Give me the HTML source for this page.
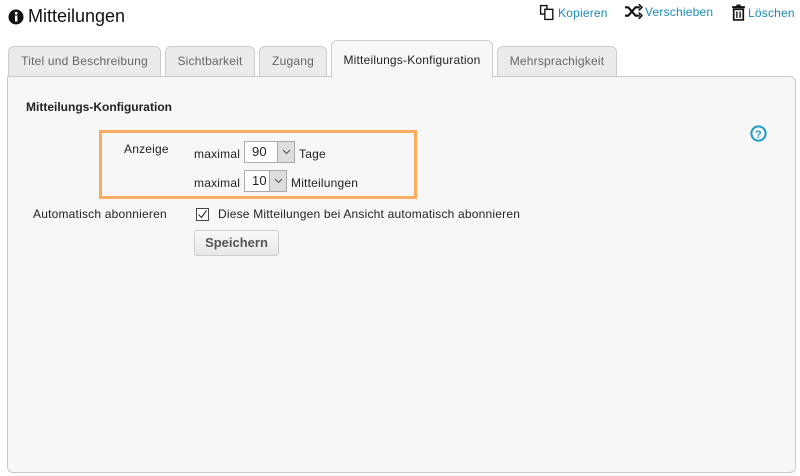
<!DOCTYPE html>
<html><head><meta charset="utf-8"><style>
*{box-sizing:border-box;margin:0;padding:0}
body{width:800px;height:476px;background:#fff;font-family:"Liberation Sans",sans-serif;font-size:12px;color:#222;position:relative;overflow:hidden;letter-spacing:0.2px}
.abs{position:absolute}
.h1{left:8px;top:6px;font-size:18px;color:#111;display:flex;align-items:center;gap:4px;letter-spacing:0}
.act{top:4px;font-size:12px;color:#1a8bb8;display:flex;align-items:center;gap:2px}
.tab{position:absolute;top:46px;height:31px;border:1px solid #ccc;border-bottom:none;border-radius:6px 6px 0 0;background:#ebebeb;color:#666;font-size:12px;text-align:center;line-height:28px}
.panel{left:7px;top:76px;width:789px;height:397px;border:1px solid #c8c8c8;border-radius:0 6px 6px 6px;background:#f7f7f7}
.sel{position:absolute;height:22px;border:1px solid #aaa;background:#fff;font-size:13px;line-height:20px;padding-left:7px}
.sel span{position:absolute;right:0;top:0;width:17px;height:20px;background:#ddd;border-left:1px solid #aaa}
.sel svg{position:absolute;left:4px;top:7px}
</style></head><body>
<div class="abs h1"><svg width="16" height="16" viewBox="0 0 16 16"><circle cx="8" cy="8" r="7.5" fill="#111"/><rect x="7" y="6.5" width="2.4" height="6" fill="#fff"/><circle cx="8.2" cy="4.2" r="1.4" fill="#fff"/></svg>Mitteilungen</div>
<div class="abs act" style="left:539px"><svg width="17" height="17" viewBox="0 0 16 16" fill="none" stroke="#111" stroke-width="1.3"><path d="M1.5 1.5h6v8h-6z"/><path d="M5.5 5h7.5v9.5H5.5z" fill="#fff"/></svg>Kopieren</div>
<div class="abs act" style="left:625px"><svg width="18" height="15" viewBox="0 0 17 14" fill="none" stroke="#111" stroke-width="2"><path d="M0 3h3l7 8h4M0 11h3l7-8h4"/><path d="M13 0l3 3-3 3M13 8l3 3-3 3" stroke-width="1.5"/></svg>Verschieben</div>
<div class="abs act" style="left:731px"><svg width="15" height="17" viewBox="0 0 14 16"><rect x="1" y="2" width="12" height="2" fill="#111"/><rect x="5" y="0.5" width="4" height="2" fill="#111"/><path d="M2.5 5h9v10h-9z" fill="none" stroke="#111" stroke-width="1.6"/><path d="M5.5 7v6M8.5 7v6" stroke="#111" stroke-width="1.3"/></svg>Löschen</div>
<div class="tab" style="left:8px;width:153px">Titel und Beschreibung</div>
<div class="tab" style="left:165px;width:90px">Sichtbarkeit</div>
<div class="tab" style="left:259px;width:68px">Zugang</div>
<div class="tab" style="left:497px;width:120px">Mehrsprachigkeit</div>
<div class="abs panel"></div>
<div class="tab" style="left:331px;top:40px;width:162px;height:38px;background:#f7f7f7;color:#222;line-height:38px">Mitteilungs-Konfiguration</div>
<div class="abs" style="left:26px;top:100px;font-weight:bold;font-size:12px;letter-spacing:0">Mitteilungs-Konfiguration</div>
<svg class="abs" style="left:750px;top:125px" width="17" height="17" viewBox="0 0 16 16"><circle cx="8" cy="8" r="6.7" fill="none" stroke="#1a9cc4" stroke-width="1.9"/><text x="8" y="12" font-size="10" font-weight="bold" text-anchor="middle" fill="#1a9cc4" font-family="Liberation Sans">?</text></svg>
<div class="abs" style="left:99px;top:130px;width:318px;height:69px;border:3px solid #fbac60"></div>
<div class="abs" style="left:124px;top:142px">Anzeige</div>
<div class="abs" style="left:194px;top:147px">maximal</div>
<div class="sel" style="left:244px;top:141px;width:51px">90<span><svg width="9" height="6" viewBox="0 0 9 6"><path d="M1 1l3.5 3.5L8 1" fill="none" stroke="#555" stroke-width="1.1"/></svg></span></div>
<div class="abs" style="left:299px;top:147px">Tage</div>
<div class="abs" style="left:194px;top:176px">maximal</div>
<div class="sel" style="left:244px;top:170px;width:43px">10<span><svg width="9" height="6" viewBox="0 0 9 6"><path d="M1 1l3.5 3.5L8 1" fill="none" stroke="#555" stroke-width="1.1"/></svg></span></div>
<div class="abs" style="left:291px;top:176px">Mitteilungen</div>
<div class="abs" style="left:33px;top:207px">Automatisch abonnieren</div>
<svg class="abs" style="left:196px;top:208px" width="13" height="13" viewBox="0 0 13 13"><rect x="0.5" y="0.5" width="12" height="12" fill="#fff" stroke="#444"/><path d="M2.5 6.5l3 3 5-7" fill="none" stroke="#333" stroke-width="1.2"/></svg>
<div class="abs" style="left:218px;top:207px">Diese Mitteilungen bei Ansicht automatisch abonnieren</div>
<div class="abs" style="left:194px;top:230px;width:85px;height:26px;border:1px solid #ccc;border-radius:3px;background:linear-gradient(#f8f8f8,#e8e8e8);font-weight:bold;font-size:13px;color:#555;text-align:center;line-height:24px;letter-spacing:0">Speichern</div>
</body></html>
